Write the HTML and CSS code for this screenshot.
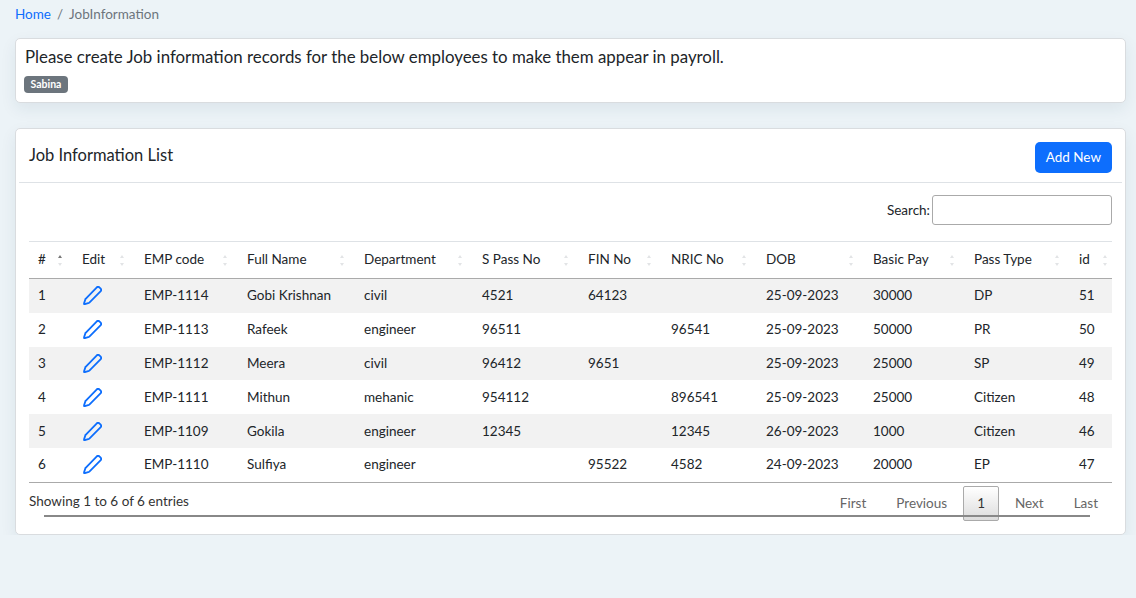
FILE: index.html
```html
<!DOCTYPE html>
<html>
    <head>
        <title>Job Information</title>
        <link rel="stylesheet" href="styles.css">
    </head>
    <body>
        <svg class="defs" width="0" height="0">
            <symbol id="pencil" viewBox="0 0 20 20">
                <path d="M14.3 1.6a2.2 2.2 0 0 1 3.1 0l1 1a2.2 2.2 0 0 1 0 3.1L6.7 17.4a1 1 0 0 1-.4.3l-4.4 1.4a.6.6 0 0 1-.8-.8l1.4-4.4a1 1 0 0 1 .3-.4z" fill="none" stroke="currentColor" stroke-width="1.9" stroke-linejoin="round"/>
            </symbol>
        </svg>
        <nav class="crumbs"><a href="#">Home</a><span class="sep">/</span><span class="here">JobInformation</span></nav>

        <div class="card notice">
            <p>Please create Job information records for the below employees to make them appear in payroll.</p>
            <span class="badge">Sabina</span>
        </div>

        <div class="card list">
            <div class="list-head">
                <h5>Job Information List</h5>
                <a class="btn" href="#">Add New</a>
            </div>
            <div class="list-body">
                <div class="search"><label for="q">Search:</label><input id="q" type="text"></div>
                <table>
                    <colgroup id="cols"></colgroup>
                    <thead><tr id="head"></tr></thead>
                    <tbody id="rows"></tbody>
                </table>
                <div class="foot">
                    <span class="info">Showing 1 to 6 of 6 entries</span>
                    <div class="pager">
                        <a href="#">First</a><a href="#">Previous</a><a class="current" href="#">1</a><a href="#">Next</a><a href="#">Last</a>
                    </div>
                    <div class="scroll-line"></div>
                </div>
            </div>
        </div>

        <script>
            var widths = [44, 62, 103, 117, 118, 106, 83, 95, 107, 101, 105, 42];
            var heads = ['#', 'Edit', 'EMP code', 'Full Name', 'Department', 'S Pass No', 'FIN No', 'NRIC No', 'DOB', 'Basic Pay', 'Pass Type', 'id'];
            var data = [
                ['EMP-1114', 'Gobi Krishnan', 'civil', '4521', '64123', '', '25-09-2023', '30000', 'DP', '51'],
                ['EMP-1113', 'Rafeek', 'engineer', '96511', '', '96541', '25-09-2023', '50000', 'PR', '50'],
                ['EMP-1112', 'Meera', 'civil', '96412', '9651', '', '25-09-2023', '25000', 'SP', '49'],
                ['EMP-1111', 'Mithun', 'mehanic', '954112', '', '896541', '25-09-2023', '25000', 'Citizen', '48'],
                ['EMP-1109', 'Gokila', 'engineer', '12345', '', '12345', '26-09-2023', '1000', 'Citizen', '46'],
                ['EMP-1110', 'Sulfiya', 'engineer', '', '95522', '4582', '24-09-2023', '20000', 'EP', '47']
            ];

            var cols = '';
            var head = '';
            for(var i = 0; i < heads.length; i++) {
                cols += "<col style='width: "+widths[i]+"px'>";
                head += "<th class='"+(i == 0 ? "asc" : "")+"'>"+heads[i]+"<span class='sort'></span></th>";
            }
            document.getElementById("cols").innerHTML = cols;
            document.getElementById("head").innerHTML = head;

            var rows = '';
            for(var r = 0; r < data.length; r++) {
                rows += "<tr><td>"+(r+1)+"</td><td><a class='edit' href='#'><svg width='19' height='19'><use href='#pencil'/></svg></a></td>";
                for(var c = 0; c < data[r].length; c++) {
                    rows += "<td>"+data[r][c]+"</td>";
                }
                rows += "</tr>";
            }
            document.getElementById("rows").innerHTML = rows;
        </script>
    </body>
</html>
```

FILE: styles.css
```css
body {
    background-color: #ecf3f7;
    margin: 0px;
    padding: 7px 10px 0px 15px;
    font-family: Lato, "Open Sans", sans-serif;
    font-size: 13.5px;
    color: #212529;
}
.defs {
    display: block;
    height: 0px;
}
a {
    text-decoration: none;
}
.crumbs {
    height: 15px;
    line-height: 15px;
    font-size: 13.5px;
    margin-bottom: 16px;
}
.crumbs a {
    color: #0d6efd;
}
.crumbs .sep {
    color: #6c757d;
    padding: 0px 6px;
}
.crumbs .here {
    color: #6c757d;
}
.card {
    background-color: white;
    border: 1px solid #d9dcdf;
    border-radius: 5px;
    box-shadow: 0px 6px 16px rgba(30, 60, 90, 0.08);
}
.notice {
    height: 63px;
    padding: 0px 8px;
    margin-bottom: 25px;
}
.notice p {
    margin: 8px 0px 8px 1px;
    font-size: 16.85px;
    line-height: 20px;
}
.badge {
    display: inline-block;
    background-color: #6c757d;
    color: white;
    font-size: 10.5px;
    font-weight: 700;
    line-height: 17px;
    padding: 0px 6.5px;
    border-radius: 4px;
}
.list {
    height: 405px;
    padding: 0px 3px;
}
.list-head {
    display: flex;
    justify-content: space-between;
    align-items: center;
    height: 53px;
    padding: 0px 10px;
    border-bottom: 1px solid #dee2e6;
}
.list-head h5 {
    margin: 0px;
    font-size: 16.5px;
    font-weight: 400;
    position: relative;
    top: -1px;
}
.btn {
    background-color: #0d6efd;
    color: white;
    font-size: 13.5px;
    line-height: 31px;
    padding: 0px 11px;
    border-radius: 5px;
    position: relative;
    top: 2px;
}
.list-body {
    padding: 12px 10px 0px 10px;
}
.search {
    display: flex;
    justify-content: flex-end;
    align-items: center;
    height: 30px;
    margin-bottom: 16px;
}
.search input {
    width: 178px;
    height: 28px;
    padding: 0px;
    margin-left: 2px;
    border: 1px solid #aaaaaa;
    border-radius: 3px;
    background-color: transparent;
}
table {
    table-layout: fixed;
    width: 1083px;
    border-collapse: separate;
    border-spacing: 0px;
}
th {
    position: relative;
    text-align: left;
    font-weight: 400;
    height: 38px;
    padding: 0px 9px 3px 9px;
    border-top: 1px solid #dee2e6;
    border-bottom: 1px solid #aaaaaa;
    box-sizing: border-box;
}
td {
    height: 33.8px;
    padding: 0px 9px 1px 9px;
    box-sizing: border-box;
}
tbody tr:nth-child(odd) td {
    background-color: #f2f2f2;
}
.sort {
    position: absolute;
    right: 13px;
    top: 13px;
    width: 0px;
    height: 11px;
}
th:last-child .sort {
    right: 7px;
}
.sort::before,
.sort::after {
    content: "";
    position: absolute;
    left: -2.5px;
    border-left: 2.5px solid transparent;
    border-right: 2.5px solid transparent;
}
.sort::before {
    top: 0px;
    border-bottom: 3px solid #e2e4e6;
}
.sort::after {
    bottom: 0px;
    border-top: 3px solid #e2e4e6;
}
.asc .sort::before {
    border-bottom-color: #777777;
}
.edit {
    display: block;
    color: #0d6efd;
    height: 20px;
}
.edit svg {
    display: block;
    margin: 2px 0px 0px 1px;
}
.foot {
    position: relative;
    display: flex;
    justify-content: space-between;
    border-top: 1px solid #aaaaaa;
    height: 38px;
}
.info {
    margin-top: 10px;
    color: #333333;
}
.pager {
    display: flex;
    align-items: flex-start;
    margin-top: 3px;
}
.pager a {
    color: #666666;
    line-height: 33px;
    padding: 0px 13px;
    border: 1px solid transparent;
    margin-left: 2px;
}
.pager a.current {
    color: #333333;
    border: 1px solid #aaaaaa;
    border-radius: 2px;
    padding: 0px 13px;
    background: linear-gradient(#ffffff, #dcdcdc);
}
.scroll-line {
    position: absolute;
    left: 15px;
    top: 32px;
    width: 1046px;
    height: 2px;
    background-color: #888888;
}
```
